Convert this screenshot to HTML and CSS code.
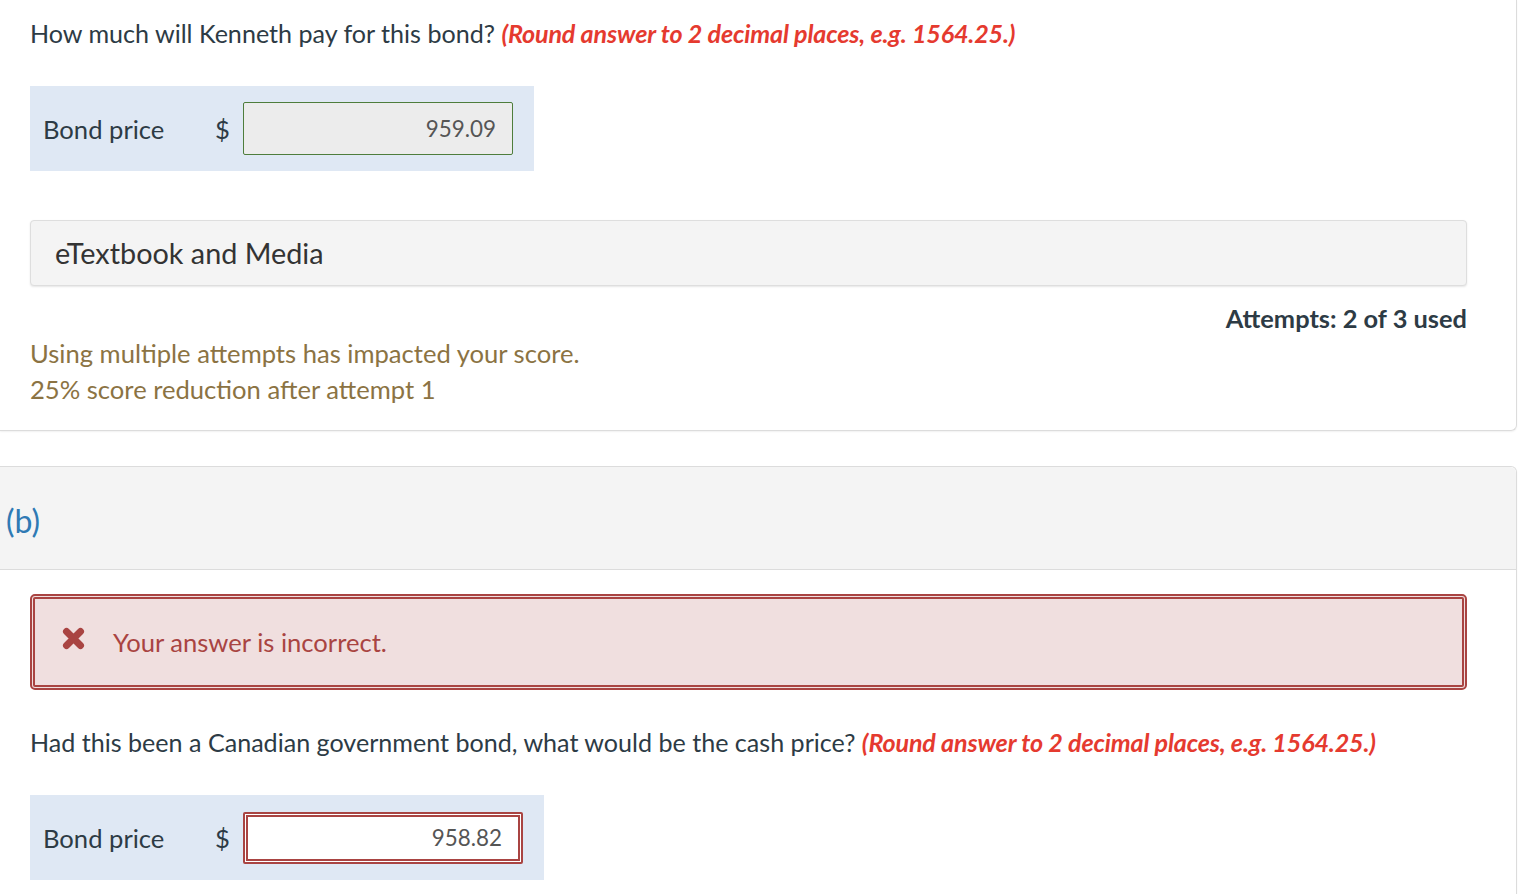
FILE: index.html
```html
<!DOCTYPE html>
<html lang="en">
<head>
  <meta charset="UTF-8">
  <meta name="viewport" content="width=device-width, initial-scale=1.0">
  <title>Question - Part (b)</title>
  <link rel="stylesheet" href="styles.css">
</head>
<body>
  <div class="part part-continued">
    <div class="part-body">
      <p class="question">How much will Kenneth pay for this bond? <span class="hint">(Round answer to 2 decimal places, e.g. 1564.25.)</span></p>

      <div class="answer-row">
        <span class="answer-label">Bond price</span>
        <span class="currency">$</span>
        <input class="answer-input correct" type="text" value="959.09" readonly>
      </div>

      <div class="media-box">eTextbook and Media</div>

      <div class="attempts">Attempts: 2 of 3 used</div>
      <div class="penalty">
        Using multiple attempts has impacted your score.<br>
        25% score reduction after attempt 1
      </div>
    </div>
  </div>

  <div class="part">
    <div class="part-header">(b)</div>
    <div class="part-body">
      <div class="feedback incorrect">
        <svg class="feedback-icon" width="23" height="23" viewBox="0 0 23 23">
          <path d="M4.5 4.5 L18.5 18.5 M18.5 4.5 L4.5 18.5" stroke="#a94442" stroke-width="7" stroke-linecap="round" fill="none"/>
        </svg>
        <span>Your answer is incorrect.</span>
      </div>

      <p class="question question-b">Had this been a Canadian government bond, what would be the cash price? <span class="hint">(Round answer to 2 decimal places, e.g. 1564.25.)</span></p>

      <div class="answer-row">
        <span class="answer-label">Bond price</span>
        <span class="currency">$</span>
        <input class="answer-input wrong" type="text" value="958.82">
      </div>
    </div>
  </div>
</body>
</html>
```

FILE: styles.css
```css
body {
  margin: 0;
  background-color: #fff;
  color: #2d3b45;
  font-family: Lato, "Open Sans", Arial, sans-serif;
  font-size: 25.6px;
}

.part {
  width: 1516px;
  border: 1px solid #dcdcdc;
  border-left: none;
  border-radius: 0 6px 6px 0;
  box-shadow: 0 1px 2px rgba(0, 0, 0, 0.06);
}

.part-continued {
  border-top: none;
  border-radius: 0 0 6px 0;
  margin-bottom: 35px;
}

.part-body {
  padding: 15px 49px 23px 30px;
}

.part-header {
  height: 103px;
  padding: 4px 0 0 6px;
  box-sizing: border-box;
  display: flex;
  align-items: center;
  background-color: #f4f4f4;
  border-bottom: 1px solid #dcdcdc;
  border-radius: 0 6px 0 0;
  color: #2f7ab4;
  font-size: 32px;
}

.part-header + .part-body {
  padding-top: 24px;
  padding-bottom: 30px;
}

.question {
  margin: 0;
  font-size: 25.1px;
  line-height: 36px;
}

.question-b {
  margin-top: 34px;
}

.hint {
  color: #e53a2f;
  font-weight: bold;
  font-style: italic;
  letter-spacing: -0.15px;
}

.answer-row {
  display: inline-flex;
  align-items: center;
  height: 85px;
  margin-top: 35px;
  padding: 0 21px 0 13px;
  background-color: #dfe8f4;
  vertical-align: top;
}

.answer-label {
  width: 172px;
}

.currency {
  width: 15px;
  margin-right: 13px;
}

.answer-input {
  box-sizing: border-box;
  font-family: inherit;
  font-size: 22.4px;
  color: #555;
  text-align: right;
  padding: 0 16px;
  outline: none;
}

.answer-input.correct {
  width: 270px;
  height: 53px;
  background-color: #ececec;
  border: 1px solid #4e7d3c;
  border-radius: 2px;
}

.answer-input.wrong {
  width: 280px;
  height: 52px;
  background-color: #fff;
  border: 5px double #a94442;
  border-radius: 2px;
}

.media-box {
  display: flex;
  align-items: center;
  height: 66px;
  box-sizing: border-box;
  margin-top: 49px;
  padding-left: 24px;
  background-color: #f4f4f4;
  border: 1px solid #dedede;
  border-radius: 4px;
  box-shadow: 0 1px 2px rgba(0, 0, 0, 0.1);
  color: #333;
  font-size: 28.8px;
}

.attempts {
  margin-top: 15px;
  line-height: 34px;
  text-align: right;
  font-weight: bold;
  font-size: 25.4px;
}

.penalty {
  line-height: 36px;
  color: #8b7343;
}

.feedback {
  display: flex;
  align-items: center;
  height: 96px;
  box-sizing: border-box;
  padding-left: 27px;
  background-color: #f0dfdf;
  border: 5px double #a94442;
  border-radius: 5px;
  color: #a94442;
}

.feedback-icon {
  margin: -8px 28px 0 0;
}
```
